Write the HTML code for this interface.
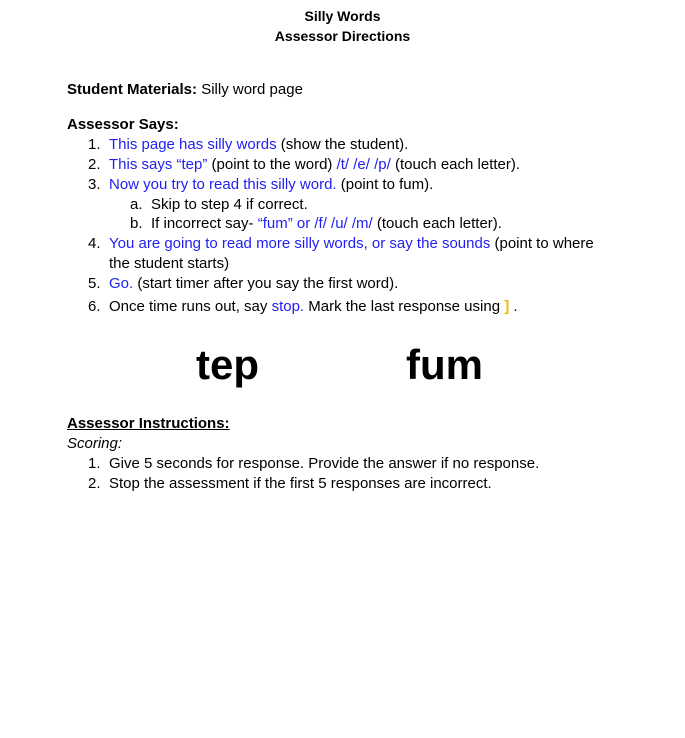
<!DOCTYPE html>
<html><head><meta charset="utf-8"><style>
html,body{margin:0;padding:0;background:#fff;width:685px;height:738px;overflow:hidden}
body{font-family:"Liberation Sans",sans-serif;font-size:15px;color:#000;position:relative}
.l{position:absolute;line-height:18px;white-space:nowrap}
.b{color:#1f1ff0}
.bold{font-weight:bold}
.c{left:0;width:685px;text-align:center;font-weight:bold;font-size:14px}
.big{position:absolute;font-weight:bold;font-size:42px;line-height:44px}
</style></head><body>
<div class="l c" style="top:7px">Silly Words</div>
<div class="l c" style="top:27px">Assessor Directions</div>
<div class="l" style="left:67px;top:81px"><span class="bold">Student Materials:</span> Silly word page</div>
<div class="l bold" style="left:67px;top:116px">Assessor Says:</div>
<div class="l" style="left:88px;top:136px">1.</div><div class="l" style="left:109px;top:136px"><span class="b">This page has silly words</span> (show the student).</div>
<div class="l" style="left:88px;top:156px">2.</div><div class="l" style="left:109px;top:156px"><span class="b">This says “tep”</span> (point to the word) <span class="b">/t/ /e/ /p/</span> (touch each letter).</div>
<div class="l" style="left:88px;top:176px">3.</div><div class="l" style="left:109px;top:176px"><span class="b">Now you try to read this silly word.</span> (point to fum).</div>
<div class="l" style="left:130px;top:196px">a.</div><div class="l" style="left:151px;top:196px">Skip to step 4 if correct.</div>
<div class="l" style="left:130px;top:215px">b.</div><div class="l" style="left:151px;top:215px">If incorrect say- <span class="b">“fum” or /f/ /u/ /m/</span> (touch each letter).</div>
<div class="l" style="left:88px;top:235px">4.</div><div class="l" style="left:109px;top:235px"><span class="b">You are going to read more silly words, or say the sounds</span> (point to where</div>
<div class="l" style="left:109px;top:255px">the student starts)</div>
<div class="l" style="left:88px;top:275px">5.</div><div class="l" style="left:109px;top:275px"><span class="b">Go.</span> (start timer after you say the first word).</div>
<div class="l" style="left:88px;top:298px">6.</div><div class="l" style="left:109px;top:298px">Once time runs out, say <span class="b">stop.</span> Mark the last response using <span style="color:#f5b800;font-weight:bold">]</span> .</div>
<div class="big" style="left:196px;top:343px">tep</div>
<div class="big" style="left:406px;top:343px">fum</div>
<div class="l bold" style="left:67px;top:415px;text-decoration:underline">Assessor Instructions:</div>
<div class="l" style="left:67px;top:435px;font-style:italic">Scoring:</div>
<div class="l" style="left:88px;top:455px">1.</div><div class="l" style="left:109px;top:455px">Give 5 seconds for response. Provide the answer if no response.</div>
<div class="l" style="left:88px;top:475px">2.</div><div class="l" style="left:109px;top:475px">Stop the assessment if the first 5 responses are incorrect.</div>
</body></html>
